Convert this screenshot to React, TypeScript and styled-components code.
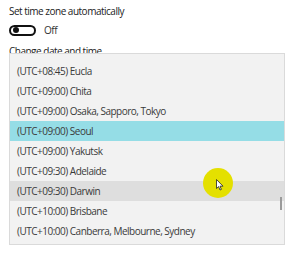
import React from 'react';
import styled, { createGlobalStyle } from 'styled-components';

const zones = [
  '(UTC+08:45) Eucla',
  '(UTC+09:00) Chita',
  '(UTC+09:00) Osaka, Sapporo, Tokyo',
  '(UTC+09:00) Seoul',
  '(UTC+09:00) Yakutsk',
  '(UTC+09:30) Adelaide',
  '(UTC+09:30) Darwin',
  '(UTC+10:00) Brisbane',
  '(UTC+10:00) Canberra, Melbourne, Sydney',
];

const SELECTED = 3;
const HOVERED = 6;

const GlobalStyle = createGlobalStyle`
  html, body {
    margin: 0;
    padding: 0;
    background: #ffffff;
  }
  body {
    font-family: 'Open Sans', 'Noto Sans', sans-serif;
    color: #1a1a1a;
    letter-spacing: -0.5px;
  }
`;

const Page = styled.div`
  position: relative;
  width: 306px;
  height: 260px;
  overflow: hidden;
  padding: 4px 0 0 9px;
  box-sizing: border-box;
`;

const Label = styled.div`
  font-size: 10px;
  line-height: 14px;
  color: #222;
`;

const ToggleRow = styled.div`
  display: flex;
  align-items: center;
  gap: 8px;
  margin-top: 6px;
  height: 12px;
`;

const Toggle = styled.div`
  width: 19px;
  height: 7px;
  border: 2px solid #111;
  border-radius: 8px;
  display: flex;
  align-items: center;
  padding: 0 2px;
`;

const Knob = styled.div`
  width: 6px;
  height: 6px;
  border-radius: 50%;
  background: #111;
`;

const ToggleText = styled.span`
  font-size: 10px;
  color: #333;
`;

const SectionLabel = styled(Label)`
  margin-top: 8px;
`;

const Popup = styled.ul`
  position: absolute;
  left: 9px;
  top: 53px;
  width: 276px;
  margin: 0;
  padding: 7px 0 3px;
  list-style: none;
  background: #f2f2f2;
  border: 1px solid #dadada;
  box-sizing: border-box;
`;

const Row = styled.li<{ $state?: 'selected' | 'hover' }>`
  height: 20px;
  line-height: 20px;
  padding-left: 7px;
  font-size: 10px;
  color: #3a3a3a;
  background: ${(p) =>
    p.$state === 'selected' ? '#95dde6' : p.$state === 'hover' ? '#dedede' : 'transparent'};
`;

const ScrollThumb = styled.div`
  position: absolute;
  right: 2px;
  top: 143px;
  width: 2px;
  height: 13px;
  background: #9a9a9a;
`;

const Spot = styled.div`
  position: absolute;
  left: 203px;
  top: 168px;
  width: 30px;
  height: 30px;
  border-radius: 50%;
  background: #e4e000;
`;

const Pointer = styled.svg`
  position: absolute;
  left: 216px;
  top: 179px;
`;

export default function App() {
  return (
    <Page>
      <GlobalStyle />
      <Label>Set time zone automatically</Label>
      <ToggleRow>
        <Toggle>
          <Knob />
        </Toggle>
        <ToggleText>Off</ToggleText>
      </ToggleRow>
      <SectionLabel>Change date and time</SectionLabel>
      <Popup>
        {zones.map((z, i) => (
          <Row key={z} $state={i === SELECTED ? 'selected' : i === HOVERED ? 'hover' : undefined}>
            {z}
          </Row>
        ))}
        <ScrollThumb />
      </Popup>
      <Spot />
      <Pointer width="8" height="12" viewBox="0 0 8 12">
        <path d="M0.5 0.5 L0.5 9.5 L2.6 7.6 L4 11 L5.4 10.4 L4 7.2 L7 7.2 Z" fill="#fff" stroke="#222" strokeWidth="0.8" />
      </Pointer>
    </Page>
  );
}
